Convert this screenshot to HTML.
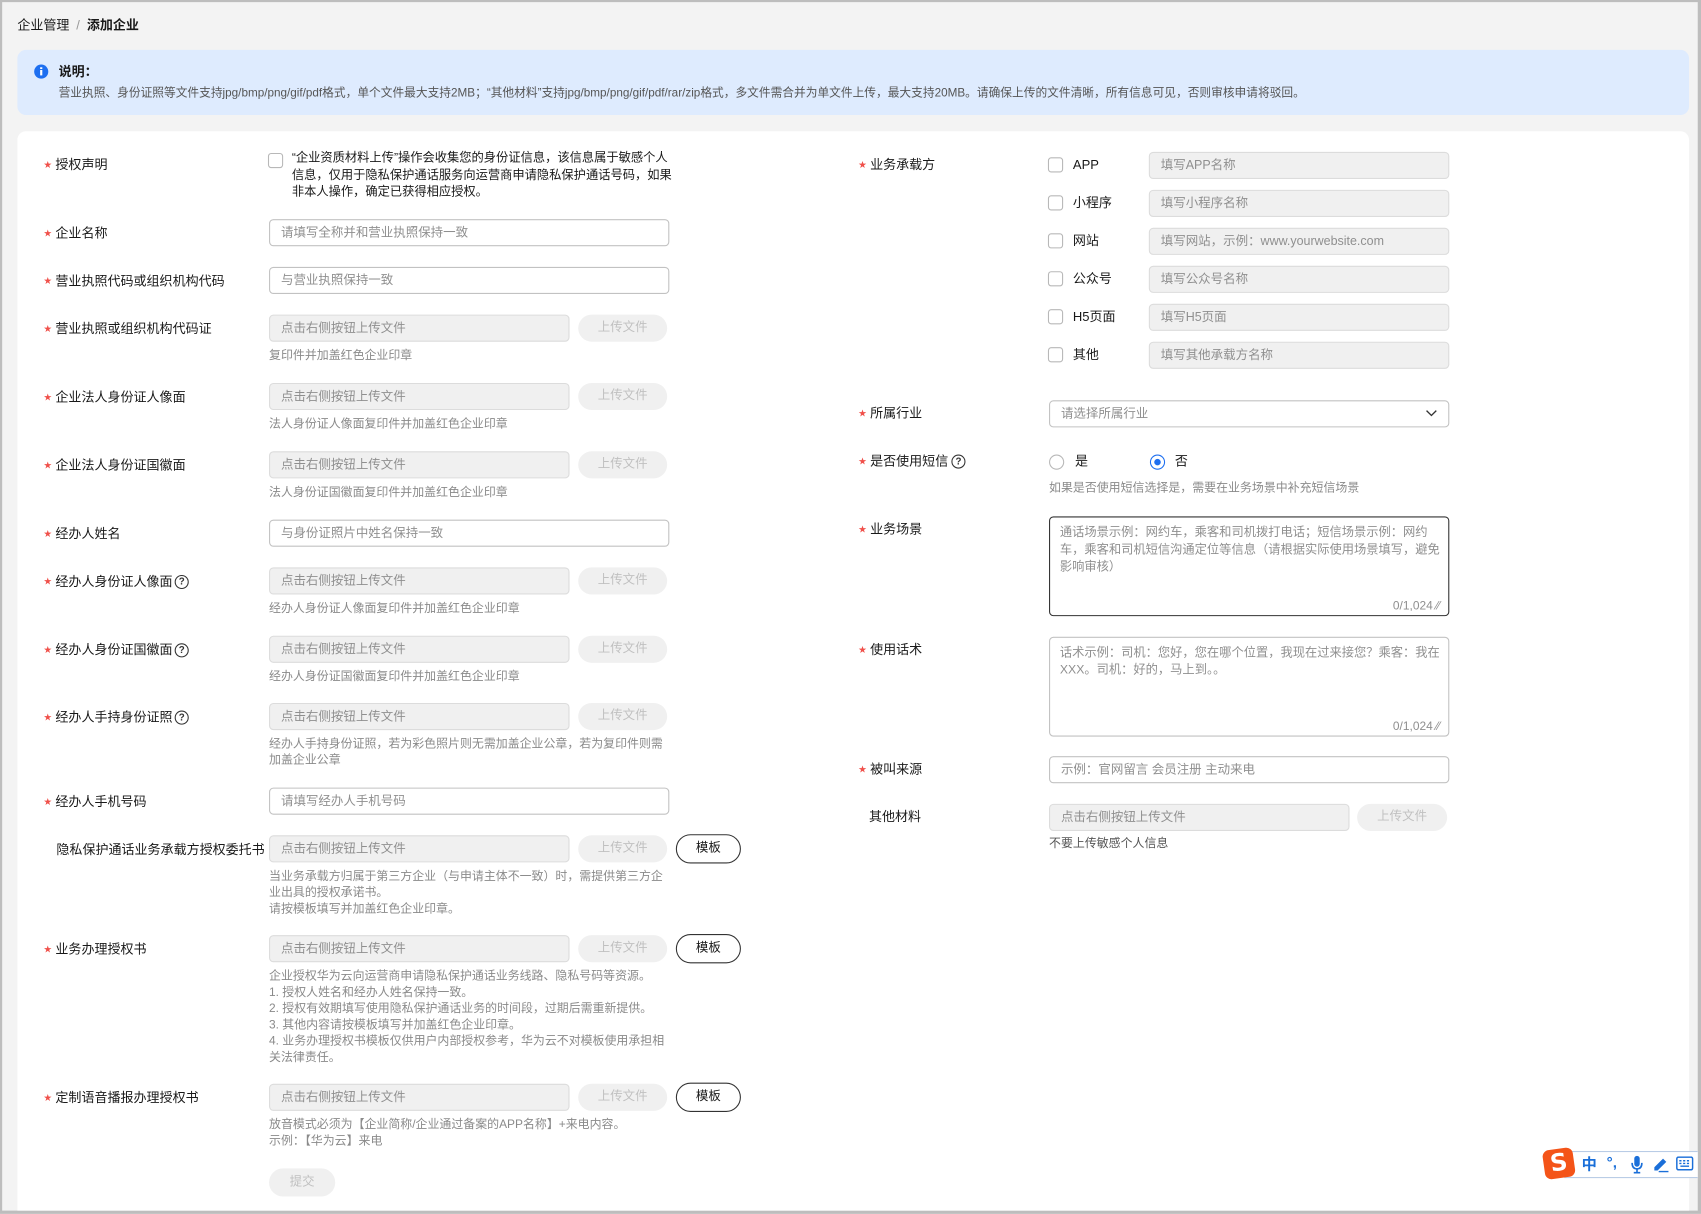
<!DOCTYPE html>
<html><head><meta charset="utf-8">
<style>
*{box-sizing:border-box;margin:0;padding:0}
html,body{width:1701px;height:1214px;overflow:hidden;background:#f3f3f3}
body{font-family:"Liberation Sans","Noto Sans CJK SC",sans-serif;color:#191919}
#w{position:absolute;left:0;top:0;width:1568px;height:1119px;transform:scale(1.08482);transform-origin:0 0;background:#f3f3f3;border-left:2px solid #bdbdbd;border-top:2px solid #bdbdbd;border-right:3px solid #bdbdbd;border-bottom:3px solid #bdbdbd;overflow:hidden}
.a{position:absolute;white-space:nowrap}
.t{position:absolute;font-size:12px;line-height:16px;white-space:nowrap}
.lab{position:absolute;font-size:12px;line-height:16px;white-space:nowrap;color:#191919}
.lab .s{color:#f0504a;margin-right:3px;font-size:9px;vertical-align:1px;font-family:"DejaVu Sans",sans-serif}
.h{position:absolute;font-size:11px;line-height:15px;color:#8a8a8a;white-space:nowrap}
.in{position:absolute;height:25px;border:1px solid #c2c2c2;border-radius:4px;background:#fff;font-size:11.5px;color:#8f8f8f;line-height:24px;padding-left:10px;white-space:nowrap}
.dis{background:#f0f0f0;border-color:#dcdcdc}
.btn{position:absolute;height:25px;border-radius:13px;background:#f0f0f0;color:#c0c0c0;font-size:11.5px;line-height:25px;text-align:center}
.tpl{position:absolute;height:27px;width:60px;border:1px solid #333;border-radius:14px;background:#fff;color:#191919;font-size:11.5px;line-height:25px;text-align:center}
.cb{position:absolute;width:14px;height:14px;border:1px solid #b8b8b8;border-radius:3px;background:#fff}
.q{position:absolute;width:13px;height:13px;border:1.3px solid #333;border-radius:50%;font-size:9px;line-height:10px;text-align:center;font-weight:bold;color:#333}
</style></head><body><div id="w">
<div class="t" style="left:14px;top:13px;">企业管理 <span style="color:#999;margin:0 3px">/</span> <b>添加企业</b></div>

<div class="a" style="left:14px;top:44px;width:1541px;height:60px;background:#deebfe;border-radius:8px"></div>
<svg class="a" style="left:29px;top:57px" width="14" height="14" viewBox="0 0 14 14"><circle cx="7" cy="7" r="6.5" fill="#1e6ff0"/><rect x="6" y="5.5" width="2" height="5" fill="#fff"/><rect x="6" y="3" width="2" height="1.6" fill="#fff"/></svg>
<div class="t" style="left:52px;top:56px;font-weight:bold">说明：</div>
<div class="h" style="left:52px;top:77px;color:#555;font-size:10.8px">营业执照、身份证照等文件支持jpg/bmp/png/gif/pdf格式，单个文件最大支持2MB；“其他材料”支持jpg/bmp/png/gif/pdf/rar/zip格式，多文件需合并为单文件上传，最大支持20MB。请确保上传的文件清晰，所有信息可见，否则审核申请将驳回。</div>

<div class="a" style="left:14px;top:119px;width:1541px;height:1010px;background:#fff;border-radius:8px"></div>

<!-- LEFT -->
<div class="lab" style="left:38px;top:142px"><span class="s">★</span>授权声明</div>
<div class="cb" style="left:245px;top:139px"></div>
<div class="t" style="left:267px;top:137px;line-height:15.5px;font-size:11.3px;white-space:normal;width:356px">“企业资质材料上传”操作会收集您的身份证信息，该信息属于敏感个人信息，仅用于隐私保护通话服务向运营商申请隐私保护通话号码，如果非本人操作，确定已获得相应授权。</div>

<div class="lab" style="left:38px;top:205px"><span class="s">★</span>企业名称</div>
<div class="in" style="left:246px;top:200px;width:369px">请填写全称并和营业执照保持一致</div>
<div class="lab" style="left:38px;top:249px"><span class="s">★</span>营业执照代码或组织机构代码</div>
<div class="in" style="left:246px;top:244px;width:369px">与营业执照保持一致</div>

<div class="lab" style="left:38px;top:293px"><span class="s">★</span>营业执照或组织机构代码证</div>
<div class="in dis" style="left:246px;top:288px;width:277px">点击右侧按钮上传文件</div>
<div class="btn" style="left:531px;top:288px;width:82px">上传文件</div>
<div class="h" style="left:246px;top:319px">复印件并加盖红色企业印章</div>

<div class="lab" style="left:38px;top:356px"><span class="s">★</span>企业法人身份证人像面</div>
<div class="in dis" style="left:246px;top:351px;width:277px">点击右侧按钮上传文件</div>
<div class="btn" style="left:531px;top:351px;width:82px">上传文件</div>
<div class="h" style="left:246px;top:382px">法人身份证人像面复印件并加盖红色企业印章</div>

<div class="lab" style="left:38px;top:419px"><span class="s">★</span>企业法人身份证国徽面</div>
<div class="in dis" style="left:246px;top:414px;width:277px">点击右侧按钮上传文件</div>
<div class="btn" style="left:531px;top:414px;width:82px">上传文件</div>
<div class="h" style="left:246px;top:445px">法人身份证国徽面复印件并加盖红色企业印章</div>

<div class="lab" style="left:38px;top:482px"><span class="s">★</span>经办人姓名</div>
<div class="in" style="left:246px;top:477px;width:369px">与身份证照片中姓名保持一致</div>

<div class="lab" style="left:38px;top:526px"><span class="s">★</span>经办人身份证人像面</div><div class="q" style="left:159px;top:528px">?</div>
<div class="in dis" style="left:246px;top:521px;width:277px">点击右侧按钮上传文件</div>
<div class="btn" style="left:531px;top:521px;width:82px">上传文件</div>
<div class="h" style="left:246px;top:552px">经办人身份证人像面复印件并加盖红色企业印章</div>

<div class="lab" style="left:38px;top:589px"><span class="s">★</span>经办人身份证国徽面</div><div class="q" style="left:159px;top:591px">?</div>
<div class="in dis" style="left:246px;top:584px;width:277px">点击右侧按钮上传文件</div>
<div class="btn" style="left:531px;top:584px;width:82px">上传文件</div>
<div class="h" style="left:246px;top:615px">经办人身份证国徽面复印件并加盖红色企业印章</div>

<div class="lab" style="left:38px;top:651px"><span class="s">★</span>经办人手持身份证照</div><div class="q" style="left:159px;top:653px">?</div>
<div class="in dis" style="left:246px;top:646px;width:277px">点击右侧按钮上传文件</div>
<div class="btn" style="left:531px;top:646px;width:82px">上传文件</div>
<div class="h" style="left:246px;top:677px">经办人手持身份证照，若为彩色照片则无需加盖企业公章，若为复印件则需<br>加盖企业公章</div>

<div class="lab" style="left:38px;top:729px"><span class="s">★</span>经办人手机号码</div>
<div class="in" style="left:246px;top:724px;width:369px">请填写经办人手机号码</div>

<div class="lab" style="left:50px;top:773px">隐私保护通话业务承载方授权委托书</div>
<div class="in dis" style="left:246px;top:768px;width:277px">点击右侧按钮上传文件</div>
<div class="btn" style="left:531px;top:768px;width:82px">上传文件</div>
<div class="tpl" style="left:621px;top:767px">模板</div>
<div class="h" style="left:246px;top:799px">当业务承载方归属于第三方企业（与申请主体不一致）时，需提供第三方企<br>业出具的授权承诺书。<br>请按模板填写并加盖红色企业印章。</div>

<div class="lab" style="left:38px;top:865px"><span class="s">★</span>业务办理授权书</div>
<div class="in dis" style="left:246px;top:860px;width:277px">点击右侧按钮上传文件</div>
<div class="btn" style="left:531px;top:860px;width:82px">上传文件</div>
<div class="tpl" style="left:621px;top:859px">模板</div>
<div class="h" style="left:246px;top:891px">企业授权华为云向运营商申请隐私保护通话业务线路、隐私号码等资源。<br>1. 授权人姓名和经办人姓名保持一致。<br>2. 授权有效期填写使用隐私保护通话业务的时间段，过期后需重新提供。<br>3. 其他内容请按模板填写并加盖红色企业印章。<br>4. 业务办理授权书模板仅供用户内部授权参考，华为云不对模板使用承担相<br>关法律责任。</div>

<div class="lab" style="left:38px;top:1002px"><span class="s">★</span>定制语音播报办理授权书</div>
<div class="in dis" style="left:246px;top:997px;width:277px">点击右侧按钮上传文件</div>
<div class="btn" style="left:531px;top:997px;width:82px">上传文件</div>
<div class="tpl" style="left:621px;top:996px">模板</div>
<div class="h" style="left:246px;top:1028px">放音模式必须为【企业简称/企业通过备案的APP名称】+来电内容。<br>示例：【华为云】来电</div>
<div class="btn" style="left:246px;top:1075px;width:61px;height:26px;line-height:26px">提交</div>

<!-- RIGHT -->
<div class="lab" style="left:789px;top:142px"><span class="s">★</span>业务承载方</div>
<div class="cb" style="left:964px;top:143px"></div><div class="t" style="left:987px;top:142px">APP</div>
<div class="in dis" style="left:1057px;top:138px;width:277px">填写APP名称</div>
<div class="cb" style="left:964px;top:178px"></div><div class="t" style="left:987px;top:177px">小程序</div>
<div class="in dis" style="left:1057px;top:173px;width:277px">填写小程序名称</div>
<div class="cb" style="left:964px;top:213px"></div><div class="t" style="left:987px;top:212px">网站</div>
<div class="in dis" style="left:1057px;top:208px;width:277px">填写网站，示例：www.yourwebsite.com</div>
<div class="cb" style="left:964px;top:248px"></div><div class="t" style="left:987px;top:247px">公众号</div>
<div class="in dis" style="left:1057px;top:243px;width:277px">填写公众号名称</div>
<div class="cb" style="left:964px;top:283px"></div><div class="t" style="left:987px;top:282px">H5页面</div>
<div class="in dis" style="left:1057px;top:278px;width:277px">填写H5页面</div>
<div class="cb" style="left:964px;top:318px"></div><div class="t" style="left:987px;top:317px">其他</div>
<div class="in dis" style="left:1057px;top:313px;width:277px">填写其他承载方名称</div>

<div class="lab" style="left:789px;top:371px"><span class="s">★</span>所属行业</div>
<div class="in" style="left:965px;top:367px;width:369px">请选择所属行业</div>
<svg class="a" style="left:1312px;top:375px" width="11" height="8" viewBox="0 0 11 8"><path d="M1 1.5 L5.5 6 L10 1.5" fill="none" stroke="#333" stroke-width="1.2"/></svg>

<div class="lab" style="left:789px;top:415px"><span class="s">★</span>是否使用短信</div><div class="q" style="left:875px;top:417px">?</div>
<div class="a" style="left:965px;top:417px;width:14px;height:14px;border:1px solid #b8b8b8;border-radius:50%"></div>
<div class="t" style="left:989px;top:415px">是</div>
<div class="a" style="left:1058px;top:417px;width:14px;height:14px;border:1.5px solid #1e6ff0;border-radius:50%"><div style="position:absolute;left:2.5px;top:2.5px;width:6px;height:6px;background:#1e6ff0;border-radius:50%"></div></div>
<div class="t" style="left:1081px;top:415px">否</div>
<div class="h" style="left:965px;top:441px">如果是否使用短信选择是，需要在业务场景中补充短信场景</div>

<div class="lab" style="left:789px;top:478px"><span class="s">★</span>业务场景</div>
<div class="a" style="left:965px;top:474px;width:369px;height:92px;border:1px solid #333;border-radius:4px"></div>
<div class="h" style="left:975px;top:481px;white-space:normal;width:356px;font-size:11.3px;line-height:16px;color:#8f8f8f">通话场景示例：网约车，乘客和司机拨打电话；短信场景示例：网约车，乘客和司机短信沟通定位等信息（请根据实际使用场景填写，避免影响审核）</div>
<div class="h" style="left:1282px;top:550px;color:#8f8f8f">0/1,024 ⁄⁄</div>

<div class="lab" style="left:789px;top:589px"><span class="s">★</span>使用话术</div>
<div class="a" style="left:965px;top:585px;width:369px;height:92px;border:1px solid #c2c2c2;border-radius:4px"></div>
<div class="h" style="left:975px;top:592px;white-space:normal;width:356px;font-size:11.3px;line-height:16px;color:#8f8f8f">话术示例：司机：您好，您在哪个位置，我现在过来接您？乘客：我在XXX。司机：好的，马上到。。</div>
<div class="h" style="left:1282px;top:661px;color:#8f8f8f">0/1,024 ⁄⁄</div>

<div class="lab" style="left:789px;top:699px"><span class="s">★</span>被叫来源</div>
<div class="in" style="left:965px;top:695px;width:369px">示例：官网留言 会员注册 主动来电</div>

<div class="lab" style="left:799px;top:743px">其他材料</div>
<div class="in dis" style="left:965px;top:739px;width:277px">点击右侧按钮上传文件</div>
<div class="btn" style="left:1249px;top:739px;width:83px">上传文件</div>
<div class="h" style="left:965px;top:769px;color:#555">不要上传敏感个人信息</div>

<!-- IME -->
<div class="a" style="left:1440px;top:1059px;width:126px;height:25px;background:#fff;border-top:1px solid #b9cce6;border-bottom:1px solid #b9cce6"></div>
<div class="a" style="left:1421px;top:1057px;width:28px;height:27px;background:#f45418;border-radius:6px;transform:rotate(-8deg);color:#fff;font-weight:bold;font-size:22px;line-height:27px;text-align:center;font-family:'DejaVu Sans',sans-serif">S</div>
<div class="a" style="left:1456px;top:1063px;color:#1a6fd9;font-size:14px;font-weight:bold;line-height:16px">中</div>
<div class="a" style="left:1479px;top:1061px;color:#1a6fd9;font-size:14px;font-weight:bold;line-height:16px">°,</div>
<svg class="a" style="left:1501px;top:1063px" width="12" height="17" viewBox="0 0 12 17"><rect x="3.5" y="0.5" width="5" height="10" rx="2.5" fill="#1a6fd9"/><path d="M1.5 7 Q1.5 12.5 6 12.5 Q10.5 12.5 10.5 7" fill="none" stroke="#1a6fd9" stroke-width="1.5"/><path d="M6 12.5 V16 M3 16 H9" stroke="#1a6fd9" stroke-width="1.5"/></svg>
<svg class="a" style="left:1521px;top:1063px" width="16" height="16" viewBox="0 0 16 16"><path d="M2 11 L10 3 L13 6 L5 14 L2 14 Z" fill="#1a6fd9"/><path d="M6 15 H15" stroke="#1a6fd9" stroke-width="1.3"/></svg>
<svg class="a" style="left:1543px;top:1064px" width="16" height="13" viewBox="0 0 16 13"><rect x="0.7" y="0.7" width="14.6" height="11.6" rx="1.5" fill="none" stroke="#1a6fd9" stroke-width="1.4"/><path d="M3 4H5M6.5 4H8.5M10 4H12M3 6.5H5M6.5 6.5H8.5M10 6.5H12M4 9H12" stroke="#1a6fd9" stroke-width="1.3"/></svg>
</div></body></html>
